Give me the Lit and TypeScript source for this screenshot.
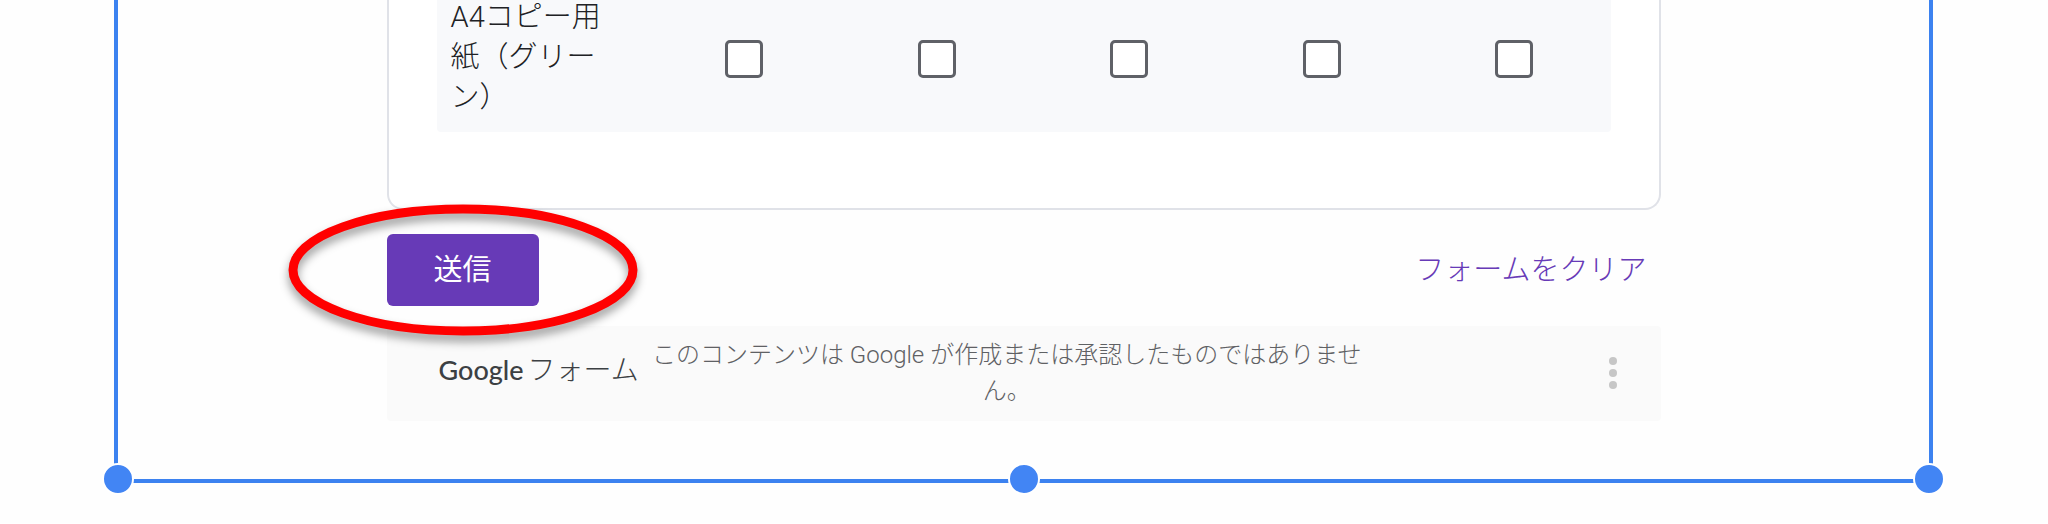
import { LitElement, html, css, svg } from "lit";
import { customElement } from "lit/decorators.js";

@customElement("form-matrix-row")
class FormMatrixRow extends LitElement {
  static styles = css`
    :host { display: block; }
    .grid { width: 100%; border-collapse: collapse; table-layout: fixed; background: #f8f9fb; border-radius: 4px; }
    .name { width: 18%; box-sizing: border-box; padding: 17px 46px 15px 14px; font-weight: 300; text-align: left; line-height: 40px; color: #202124; }
    .cell { padding: 6px 0 0; text-align: center; vertical-align: middle; }
    .box { appearance: none; display: block; width: 38px; height: 38px; margin: 0 auto; border: 3px solid #5f6167; border-radius: 5px; background: #fff; }
  `;
  render() {
    return html`<table class="grid">
      <tr>
        <th class="name" scope="row" id="item">A4コピー用紙（グリーン）</th>
        ${[1, 2, 3, 4, 5].map(() => html`<td class="cell"><input class="box" type="checkbox" aria-labelledby="item" /></td>`)}
      </tr>
    </table>`;
  }
}

@customElement("form-footer")
class FormFooter extends LitElement {
  static styles = css`
    :host { display: block; }
    .bar { display: flex; align-items: center; background: #fafafa; border-radius: 4px; padding: 11px 32px 12px 52px; color: #3c4043; }
    .brand { display: flex; align-items: baseline; gap: 4px; white-space: nowrap; flex: none; font-size: 28px; line-height: 36px; margin-bottom: 6px; }
    .google { font: 500 27px/36px "Lato", sans-serif; }
    .note { margin: 0 0 0 12px; max-width: 712px; font-size: 24px; line-height: 36px; color: #5f6164; text-align: center; }
    .more { margin-left: auto; padding: 0; border: 0; background: none; display: flex; }
  `;
  render() {
    return html`<footer class="bar">
      <div class="brand"><span class="google">Google</span><span>フォーム</span></div>
      <p class="note">このコンテンツは Google が作成または承認したものではありません。</p>
      <button class="more" type="button" aria-label="その他">
        <svg width="32" height="36" viewBox="0 0 32 36" fill="#c6c6c6">
          ${[6, 18, 30].map((y) => svg`<circle cx="16" cy=${y} r="4" />`)}
        </svg>
      </button>
    </footer>`;
  }
}

@customElement("app-root")
class AppRoot extends LitElement {
  static styles = css`
    :host { display: block; overflow: hidden; background: #fefefe; font-family: Roboto, "Noto Sans CJK JP", sans-serif; font-size: 29px; font-weight: 300; color: #202124; }
    .frame { position: relative; margin: 0 115px 40px 114px; padding-bottom: 58px; border: solid #3c82f0; border-width: 0 4px 4px; }
    .form { max-width: 1274px; margin: 0 auto; }
    .card { margin-top: -20px; box-sizing: border-box; padding: 0 48px 76px; border: solid #e0e2e8; border-width: 0 2px 2px; border-radius: 0 0 16px 16px; background: #fff; }
    .actions { display: flex; align-items: center; justify-content: space-between; margin: 24px 0 20px; }
    .submit-area { position: relative; display: flex; }
    .submit { height: 72px; padding: 0 47px 6px; border: 0; border-radius: 6px; background: #673ab7; color: #fff; font: inherit; font-weight: 400; }
    .ring { position: absolute; left: -112px; top: -44px; overflow: visible; pointer-events: none; filter: drop-shadow(0 6px 5px #0006); }
    .clear { padding: 0 14px 6px 0; border: 0; background: none; color: #673ab7; font: inherit; }
    .handle { position: absolute; bottom: -16px; width: 28px; height: 28px; border: 2px solid #fff; border-radius: 50%; background: #4285f4; }
    .start { left: -16px; }
    .middle { left: calc(50% - 16px); }
    .end { right: -16px; }
  `;
  render() {
    return html`<main class="frame">
      <form class="form">
        <section class="card"><form-matrix-row></form-matrix-row></section>
        <div class="actions">
          <div class="submit-area">
            <button class="submit" type="button">送信</button>
            <svg class="ring" width="376" height="160" viewBox="0 0 376 160">
              <ellipse cx="188" cy="80" rx="170" ry="61" fill="none" stroke="#f00" stroke-width="9" />
            </svg>
          </div>
          <button class="clear" type="button">フォームをクリア</button>
        </div>
        <form-footer></form-footer>
      </form>
      <span class="handle start"></span>
      <span class="handle middle"></span>
      <span class="handle end"></span>
    </main>`;
  }
}
